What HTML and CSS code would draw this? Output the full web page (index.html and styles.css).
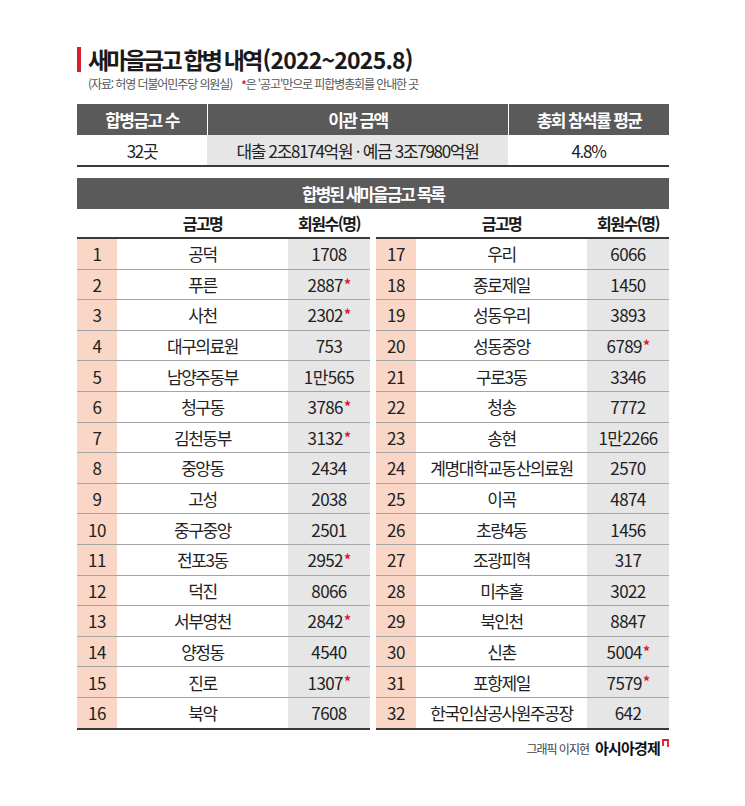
FILE: index.html
```html
<!DOCTYPE html>
<html lang="ko">
<head>
<meta charset="utf-8">
<title>새마을금고 합병 내역</title>
<link rel="stylesheet" href="styles.css">
</head>
<body>
<div class="page">
  <div class="title">
    <span class="bar"></span>
    <h1><span class="ko">새마을금고 합병 내역</span><span class="num">(2022~2025.8)</span></h1>
  </div>
  <p class="sub">(자료: 허영 더불어민주당 의원실)<span class="note"><span class="ast">*</span>은 '공고'만으로 피합병총회를 안내한 곳</span></p>

  <div class="summary">
    <div class="sh">합병금고 수</div>
    <div class="sh">이관 금액</div>
    <div class="sh">총회 참석률 평균</div>
    <div class="sc">32곳</div>
    <div class="sc gray">대출 2조8174억원 · 예금 3조7980억원</div>
    <div class="sc">4.8%</div>
  </div>

  <div class="listhead">합병된 새마을금고 목록</div>

  <div class="lists">
    <div class="list">
      <div class="row head"><div></div><div>금고명</div><div>회원수(명)</div></div>
      <div class="row"><div class="no">1</div><div class="nm">공덕</div><div class="ct">1708</div></div>
      <div class="row"><div class="no">2</div><div class="nm">푸른</div><div class="ct">2887<span class="ast">*</span></div></div>
      <div class="row"><div class="no">3</div><div class="nm">사천</div><div class="ct">2302<span class="ast">*</span></div></div>
      <div class="row"><div class="no">4</div><div class="nm">대구의료원</div><div class="ct">753</div></div>
      <div class="row"><div class="no">5</div><div class="nm">남양주동부</div><div class="ct">1만565</div></div>
      <div class="row"><div class="no">6</div><div class="nm">청구동</div><div class="ct">3786<span class="ast">*</span></div></div>
      <div class="row"><div class="no">7</div><div class="nm">김천동부</div><div class="ct">3132<span class="ast">*</span></div></div>
      <div class="row"><div class="no">8</div><div class="nm">중앙동</div><div class="ct">2434</div></div>
      <div class="row"><div class="no">9</div><div class="nm">고성</div><div class="ct">2038</div></div>
      <div class="row"><div class="no">10</div><div class="nm">중구중앙</div><div class="ct">2501</div></div>
      <div class="row"><div class="no">11</div><div class="nm">전포3동</div><div class="ct">2952<span class="ast">*</span></div></div>
      <div class="row"><div class="no">12</div><div class="nm">덕진</div><div class="ct">8066</div></div>
      <div class="row"><div class="no">13</div><div class="nm">서부영천</div><div class="ct">2842<span class="ast">*</span></div></div>
      <div class="row"><div class="no">14</div><div class="nm">양정동</div><div class="ct">4540</div></div>
      <div class="row"><div class="no">15</div><div class="nm">진로</div><div class="ct">1307<span class="ast">*</span></div></div>
      <div class="row last"><div class="no">16</div><div class="nm">북악</div><div class="ct">7608</div></div>
    </div>
    <div class="list">
      <div class="row head"><div></div><div>금고명</div><div>회원수(명)</div></div>
      <div class="row"><div class="no">17</div><div class="nm">우리</div><div class="ct">6066</div></div>
      <div class="row"><div class="no">18</div><div class="nm">종로제일</div><div class="ct">1450</div></div>
      <div class="row"><div class="no">19</div><div class="nm">성동우리</div><div class="ct">3893</div></div>
      <div class="row"><div class="no">20</div><div class="nm">성동중앙</div><div class="ct">6789<span class="ast">*</span></div></div>
      <div class="row"><div class="no">21</div><div class="nm">구로3동</div><div class="ct">3346</div></div>
      <div class="row"><div class="no">22</div><div class="nm">청송</div><div class="ct">7772</div></div>
      <div class="row"><div class="no">23</div><div class="nm">송현</div><div class="ct">1만2266</div></div>
      <div class="row"><div class="no">24</div><div class="nm">계명대학교동산의료원</div><div class="ct">2570</div></div>
      <div class="row"><div class="no">25</div><div class="nm">이곡</div><div class="ct">4874</div></div>
      <div class="row"><div class="no">26</div><div class="nm">초량4동</div><div class="ct">1456</div></div>
      <div class="row"><div class="no">27</div><div class="nm">조광피혁</div><div class="ct">317</div></div>
      <div class="row"><div class="no">28</div><div class="nm">미추홀</div><div class="ct">3022</div></div>
      <div class="row"><div class="no">29</div><div class="nm">북인천</div><div class="ct">8847</div></div>
      <div class="row"><div class="no">30</div><div class="nm">신촌</div><div class="ct">5004<span class="ast">*</span></div></div>
      <div class="row"><div class="no">31</div><div class="nm">포항제일</div><div class="ct">7579<span class="ast">*</span></div></div>
      <div class="row last"><div class="no">32</div><div class="nm">한국인삼공사원주공장</div><div class="ct">642</div></div>
    </div>
  </div>

  <div class="footer">
    <span class="credit">그래픽 이지현</span>
    <span class="brand">아시아경제</span>
    <svg class="mark" width="7" height="8" viewBox="0 0 7 8"><path d="M1 7 V1 H6 V8" fill="none" stroke="#e0182d" stroke-width="1.8"/></svg>
  </div>
</div>
</body>
</html>
```

FILE: styles.css
```css
html, body {
  margin: 0;
  padding: 0;
  background: #ffffff;
}
body {
  font-family: "Noto Sans CJK KR", "Noto Sans", sans-serif;
  color: #222222;
}
.page {
  width: 592px;
  padding: 45px 0 0 77px;
}
.title {
  display: flex;
  align-items: center;
  height: 28px;
}
.bar {
  width: 4px;
  height: 25px;
  background: #d8202f;
  margin-right: 7px;
}
h1 {
  margin: 0;
  font-size: 23px;
  font-weight: 700;
  line-height: 28px;
  color: #1a1a1a;
}
h1 .ko {
  letter-spacing: -2.8px;
  margin-right: 2px;
}
h1 .num {
  letter-spacing: -0.8px;
}
.sub {
  margin: 4px 0 0 11px;
  font-size: 12px;
  line-height: 14px;
  letter-spacing: -1.1px;
  color: #555555;
}
.sub .note {
  margin-left: 9px;
}
.ast {
  color: #e4132c;
  font-weight: 700;
}
.sub .ast {
  font-size: 11px;
}
.summary {
  margin-top: 13px;
  display: grid;
  grid-template-columns: 130px 301px 161px;
  border-bottom: 2px solid #3a3a3a;
}
.sh {
  height: 31px;
  background: #5a5a5a;
  color: #ffffff;
  font-weight: 700;
  font-size: 17px;
  letter-spacing: -1.6px;
  display: flex;
  align-items: center;
  justify-content: center;
}
.sh + .sh {
  border-left: 1.5px solid #ffffff;
}
.sc {
  height: 30px;
  font-size: 17px;
  letter-spacing: -1.3px;
  display: flex;
  align-items: center;
  justify-content: center;
}
.sc.gray {
  background: #e6e6e6;
}
.listhead {
  margin-top: 11px;
  height: 31px;
  background: #5a5a5a;
  color: #ffffff;
  font-weight: 700;
  font-size: 17px;
  letter-spacing: -2px;
  display: flex;
  align-items: center;
  justify-content: center;
}
.lists {
  display: grid;
  grid-template-columns: 1fr 1fr;
  column-gap: 6px;
}
.row {
  display: grid;
  grid-template-columns: 40px 171px 82px;
  height: 29.6px;
  border-bottom: 1px solid #a5a5a5;
  font-size: 17px;
}
.row > div {
  display: flex;
  align-items: center;
  justify-content: center;
}
.row.head {
  height: 28px;
  border-bottom: 2px solid #3a3a3a;
  font-weight: 700;
  font-size: 16px;
  letter-spacing: -1.5px;
  color: #1a1a1a;
}
.row.last {
  border-bottom: 2px solid #3a3a3a;
}
.no {
  background: #f9d6c5;
  letter-spacing: -0.5px;
}
.nm {
  letter-spacing: -1.4px;
}
.ct {
  background: #e6e6e6;
  letter-spacing: -0.6px;
}
.ct .ast {
  font-size: 14px;
  align-self: flex-start;
  margin-top: 4px;
  margin-left: 1px;
}
.footer {
  margin-top: 9px;
  display: flex;
  justify-content: flex-end;
  align-items: flex-end;
}
.credit {
  font-size: 12px;
  letter-spacing: -1px;
  color: #444444;
  line-height: 16px;
  margin-right: 6px;
}
.brand {
  font-size: 15px;
  font-weight: 700;
  letter-spacing: -0.8px;
  color: #111111;
  line-height: 18px;
}
.mark {
  margin-left: 2px;
  align-self: flex-start;
}
```
